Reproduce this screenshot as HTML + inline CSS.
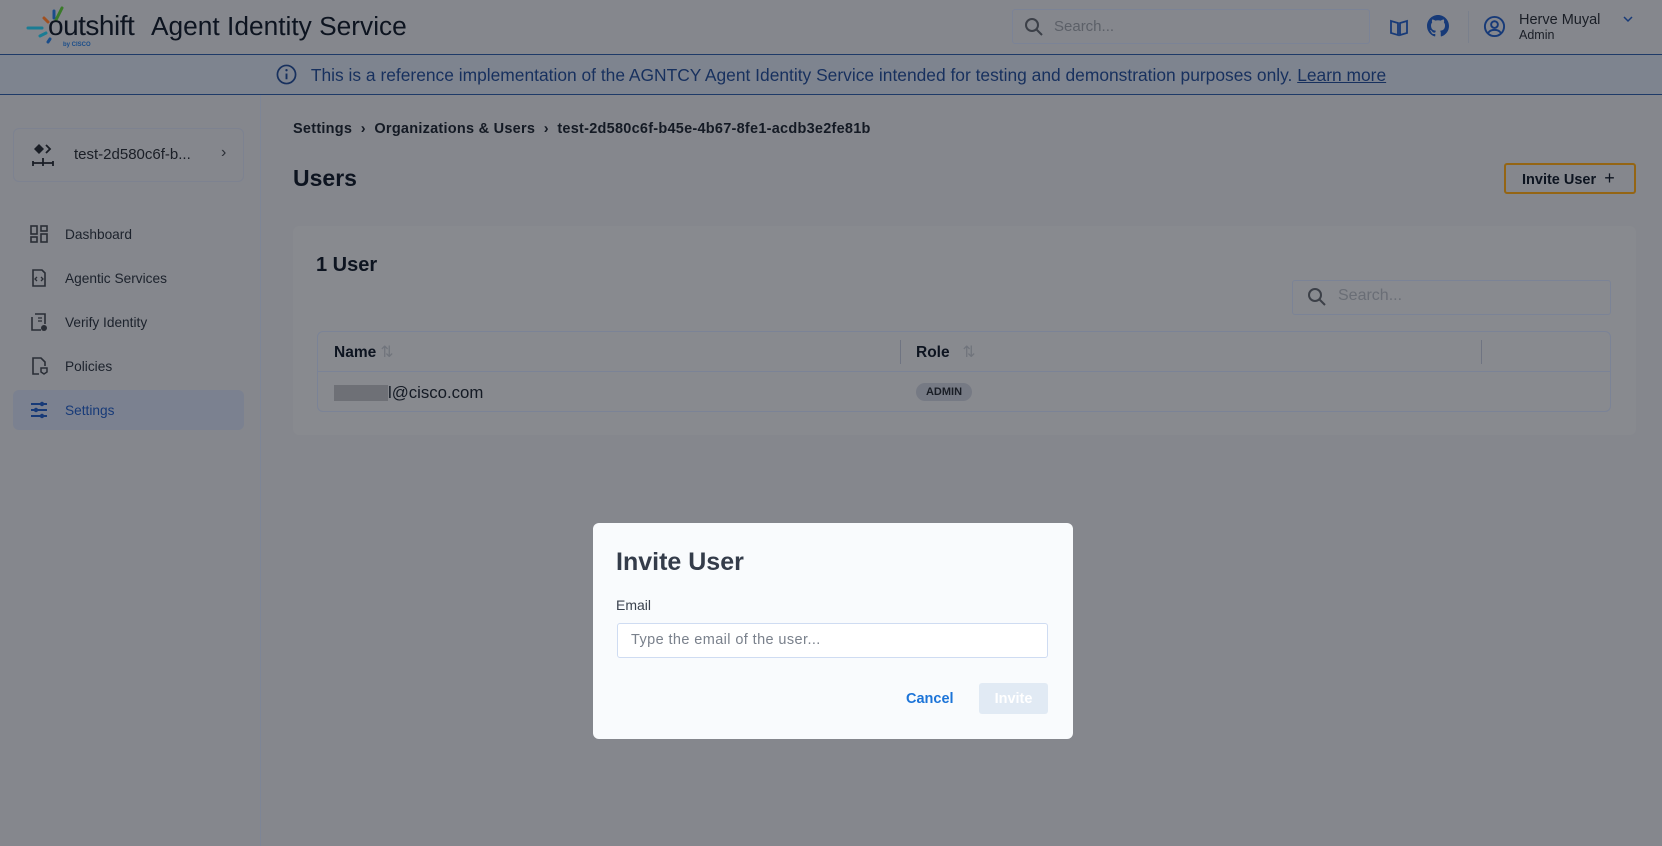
<!DOCTYPE html>
<html><head><meta charset="utf-8"><style>
*{box-sizing:border-box;margin:0;padding:0}
body{width:1662px;height:846px;overflow:hidden;background:#85878d;font-family:"Liberation Sans",sans-serif;position:relative;color:#0d1420}
.a{position:absolute}
.hdr{left:0;top:0;width:1662px;height:55px;background:#85878d;border-bottom:1.5px solid #1e3a68}
.ban{left:0;top:55px;width:1662px;height:40px;background:#7e848f;border-bottom:1.5px solid #1e3a68;color:#17305e;font-size:17.4px;text-align:center;line-height:40px}
.side{left:0;top:95px;width:261px;height:751px;border-right:1px solid #7d8596}
.nav{left:65px;font-size:13.7px;color:#1c222c}
.ico{left:29px;width:20px;height:20px}
</style></head><body>
<div class="a hdr"></div>
<svg class="a" style="left:26px;top:4px" width="60" height="46" viewBox="0 0 60 46">
<line x1="2" y1="24" x2="16" y2="24" stroke="#1a7c94" stroke-width="3" stroke-linecap="round"/>
<line x1="28" y1="7" x2="28" y2="14" stroke="#1a4d8a" stroke-width="3" stroke-linecap="round"/>
<line x1="36" y1="4" x2="30" y2="16" stroke="#3a7a2a" stroke-width="3" stroke-linecap="round"/>
<line x1="18" y1="14" x2="22" y2="18" stroke="#a05020" stroke-width="3" stroke-linecap="round"/>
<line x1="14" y1="32" x2="20" y2="29" stroke="#1a7c94" stroke-width="3" stroke-linecap="round"/>
<line x1="22" y1="38" x2="24" y2="35" stroke="#1a4d8a" stroke-width="3" stroke-linecap="round"/>
</svg>
<div class="a" style="left:48px;top:10px;font-size:28px;color:#0d1420;letter-spacing:-0.5px">outshift</div>
<div class="a" style="left:63px;top:42px;font-size:6px;color:#1a4d8a;font-weight:bold">by CISCO</div>
<div class="a" style="left:151px;top:11px;font-size:26.3px;color:#0d1420">Agent Identity Service</div>
<div class="a" style="left:1012px;top:9px;width:358px;height:35px;border:1.5px solid #7b8396;border-radius:3px"></div>
<svg class="a" style="left:1024px;top:17px" width="20" height="20" viewBox="0 0 20 20"><circle cx="8" cy="8" r="6" fill="none" stroke="#3c4048" stroke-width="2"/><line x1="12.5" y1="12.5" x2="18" y2="18" stroke="#3c4048" stroke-width="2"/></svg>
<div class="a" style="left:1054px;top:18px;font-size:15px;color:#5c6068">Search...</div>
<svg class="a" style="left:1389px;top:17px" width="20" height="20" viewBox="0 0 20 20"><path d="M2 4 L9 6 L9 18 L2 16 Z M18 4 L11 6 L11 18 L18 16 Z" fill="none" stroke="#173a78" stroke-width="1.8"/></svg>
<svg class="a" style="left:1427px;top:15px" width="22" height="22" viewBox="0 0 16 16"><path fill="#173a78" d="M8 0C3.58 0 0 3.580 0 8c0 3.54 2.29 6.53 5.470 7.59.4.07.55-.17.55-.38 0-.19-.01-.82-.01-1.49-2.01.37-2.53-.49-2.690-.94-.09-.23-.48-.94-.82-1.13-.28-.15-.68-.52-.01-.53.63-.01 1.08.58 1.230.82.72 1.21 1.870.87 2.330.66.07-.52.28-.87.51-1.07-1.78-.2-3.64-.89-3.64-3.95 0-.87.31-1.59.82-2.150-.08-.2-.36-1.02.08-2.12 0 0 .67-.21 2.2.82.64-.18 1.32-.27 2-.27.68 0 1.36.09 2 .27 1.53-1.04 2.2-.82 2.2-.82.44 1.1.16 1.92.08 2.12.51.56.82 1.27.82 2.15 0 3.07-1.87 3.75-3.65 3.95.29.25.54.73.54 1.48 0 1.07-.01 1.93-.01 2.2 0 .21.15.46.55.38A8.01 8.01 0 0016 8c0-4.42-3.58-8-8-8z"/></svg>
<div class="a" style="left:1468px;top:11px;width:1px;height:32px;background:#7a808c"></div>
<svg class="a" style="left:1483px;top:15px" width="23" height="23" viewBox="0 0 24 24"><circle cx="12" cy="12" r="10" fill="none" stroke="#173a78" stroke-width="2"/><circle cx="12" cy="10" r="3.5" fill="none" stroke="#173a78" stroke-width="2"/><path d="M5.5 18.5 C8 14.5 16 14.5 18.5 18.5" fill="none" stroke="#173a78" stroke-width="2"/></svg>
<div class="a" style="left:1519px;top:12px;font-size:14.5px;color:#1a1e26">Herve Muyal</div>
<div class="a" style="left:1519px;top:28px;font-size:12.5px;color:#1a1e26">Admin</div>
<svg class="a" style="left:1622px;top:14px" width="12" height="10" viewBox="0 0 12 10"><path d="M2 3 L6 7 L10 3" fill="none" stroke="#173a78" stroke-width="1.5"/></svg>
<div class="a ban">
<svg style="vertical-align:middle;margin-right:14px;position:relative;top:-2px" width="21" height="21" viewBox="0 0 22 22"><circle cx="11" cy="11" r="9.5" fill="none" stroke="#17305e" stroke-width="1.8"/><line x1="11" y1="10" x2="11" y2="16" stroke="#17305e" stroke-width="2"/><circle cx="11" cy="6.5" r="1.2" fill="#17305e"/></svg>This is a reference implementation of the AGNTCY Agent Identity Service intended for testing and demonstration purposes only. <u>Learn more</u></div>
<div class="a side"></div>
<div class="a" style="left:13px;top:128px;width:231px;height:54px;border:1px solid #7d8290;border-radius:6px"></div>
<svg class="a" style="left:30px;top:142px" width="26" height="26" viewBox="0 0 26 26"><path d="M9 2 L14 7 L9 12 L4 7Z" fill="#1a1e26"/><path d="M16 3 L20 7 L16 11" fill="none" stroke="#1a1e26" stroke-width="1.8"/><path d="M3 21 H23 M13 16 V24 M3 19 V24 M23 19 V24" stroke="#1a1e26" stroke-width="1.8" fill="none"/></svg>
<div class="a" style="left:74px;top:146px;font-size:15px;color:#1a1e26">test-2d580c6f-b...</div>
<div class="a" style="left:221px;top:144px;font-size:16px;color:#2a2e36">›</div>
<div class="a" style="left:13px;top:390px;width:231px;height:40px;background:#7b8190;border-radius:6px"></div>
<svg class="a ico" style="top:224px" viewBox="0 0 20 20"><rect x="2" y="2" width="6" height="8" fill="none" stroke="#2a2e36" stroke-width="1.6"/><rect x="12" y="2" width="6" height="5" fill="none" stroke="#2a2e36" stroke-width="1.6"/><rect x="2" y="13" width="6" height="5" fill="none" stroke="#2a2e36" stroke-width="1.6"/><rect x="12" y="10" width="6" height="8" fill="none" stroke="#2a2e36" stroke-width="1.6"/></svg>
<div class="a nav" style="top:227px">Dashboard</div>
<svg class="a ico" style="top:268px" viewBox="0 0 20 20"><path d="M4 2 H13 L16 5 V18 H4 Z" fill="none" stroke="#2a2e36" stroke-width="1.6"/><path d="M8 9 L6 11 L8 13 M12 9 L14 11 L12 13" fill="none" stroke="#2a2e36" stroke-width="1.3"/></svg>
<div class="a nav" style="top:271px">Agentic Services</div>
<svg class="a ico" style="top:312px" viewBox="0 0 20 20"><path d="M6 2 H16 V12 M3 5 V18 H12" fill="none" stroke="#2a2e36" stroke-width="1.6"/><path d="M9 6 H13 M9 9 H13" stroke="#2a2e36" stroke-width="1.3"/><circle cx="15" cy="16" r="3" fill="#2a2e36"/></svg>
<div class="a nav" style="top:315px">Verify Identity</div>
<svg class="a ico" style="top:356px" viewBox="0 0 20 20"><path d="M10 18 H4 V2 H12 L16 6 V10" fill="none" stroke="#2a2e36" stroke-width="1.6"/><path d="M12 12 H18 V16 L15 18 L12 16Z" fill="none" stroke="#2a2e36" stroke-width="1.5"/></svg>
<div class="a nav" style="top:359px">Policies</div>
<svg class="a ico" style="top:400px" viewBox="0 0 20 20"><path d="M2 4 H18 M2 10 H18 M2 16 H18" stroke="#173a78" stroke-width="2"/><circle cx="13" cy="4" r="2.2" fill="#173a78"/><circle cx="7" cy="10" r="2.2" fill="#173a78"/><circle cx="13" cy="16" r="2.2" fill="#173a78"/></svg>
<div class="a nav" style="top:403px;color:#173a78">Settings</div>
<div class="a" style="left:293px;top:121px;font-size:14.5px;font-weight:bold;letter-spacing:0.25px;color:#141a24">Settings &nbsp;›&nbsp; Organizations &amp; Users &nbsp;›&nbsp; test-2d580c6f-b45e-4b67-8fe1-acdb3e2fe81b</div>
<div class="a" style="left:293px;top:165px;font-size:23px;font-weight:bold;color:#0d1420">Users</div>
<div class="a" style="left:1504px;top:163px;width:132px;height:31px;border:2px solid #946514;border-radius:3px;font-size:14.5px;font-weight:bold;line-height:27px;padding-left:16px;color:#0d1420">Invite User &nbsp;<span style="font-weight:normal;font-size:18px">+</span></div>
<div class="a" style="left:293px;top:226px;width:1343px;height:209px;background:#888a8f;border-radius:6px"></div>
<div class="a" style="left:316px;top:254px;font-size:20px;font-weight:bold;color:#0d1420">1 User</div>
<div class="a" style="left:1292px;top:280px;width:319px;height:35px;border:1.5px solid #7b8396;border-radius:3px"></div>
<svg class="a" style="left:1307px;top:287px" width="20" height="20" viewBox="0 0 20 20"><circle cx="8" cy="8" r="6" fill="none" stroke="#3c4048" stroke-width="2"/><line x1="12.5" y1="12.5" x2="18" y2="18" stroke="#3c4048" stroke-width="2"/></svg>
<div class="a" style="left:1338px;top:287px;font-size:16px;color:#6a6e76">Search...</div>
<div class="a" style="left:317px;top:331px;width:1294px;height:81px;border:1px solid #7b8396;border-radius:6px"></div>
<div class="a" style="left:317px;top:371px;width:1294px;height:1px;background:#7b8396"></div>
<div class="a" style="left:900px;top:340px;width:1px;height:24px;background:#6f7482"></div>
<div class="a" style="left:1481px;top:340px;width:1px;height:24px;background:#6f7482"></div>
<div class="a" style="left:334px;top:343px;font-size:15.5px;font-weight:bold;color:#0d1420">Name <span style="color:#70747c;font-weight:normal">⇅</span></div>
<div class="a" style="left:916px;top:343px;font-size:15.5px;font-weight:bold;color:#0d1420">Role &nbsp;&nbsp;<span style="color:#70747c;font-weight:normal">⇅</span></div>
<div class="a" style="left:334px;top:385px;width:54px;height:16px;background:#6e7076"></div>
<div class="a" style="left:388px;top:383px;font-size:16.8px;color:#141a24">l@cisco.com</div>
<div class="a" style="left:916px;top:383px;width:56px;height:18px;background:#767a84;border-radius:9px;font-size:11px;font-weight:bold;text-align:center;line-height:18px;color:#1a1e26">ADMIN</div>
<div class="a" style="left:593px;top:523px;width:480px;height:216px;background:#f9fbfd;border-radius:6px"></div>
<div class="a" style="left:616px;top:548px;font-size:25px;font-weight:bold;color:#343c4a">Invite User</div>
<div class="a" style="left:616px;top:597px;font-size:14px;color:#3a424e">Email</div>
<div class="a" style="left:617px;top:623px;width:431px;height:35px;border:1.5px solid #cfdcf2;border-radius:3px;background:#fff;font-size:14.5px;color:#7a818c;line-height:33px;padding-left:13px;letter-spacing:0.4px">Type the email of the user...</div>
<div class="a" style="left:906px;top:691px;font-size:14.5px;font-weight:bold;color:#1c74d8">Cancel</div>
<div class="a" style="left:979px;top:683px;width:69px;height:31px;background:#e1eaf4;border-radius:3px;font-size:14.5px;font-weight:bold;color:#fff;text-align:center;line-height:33px">Invite</div>
</body></html>
